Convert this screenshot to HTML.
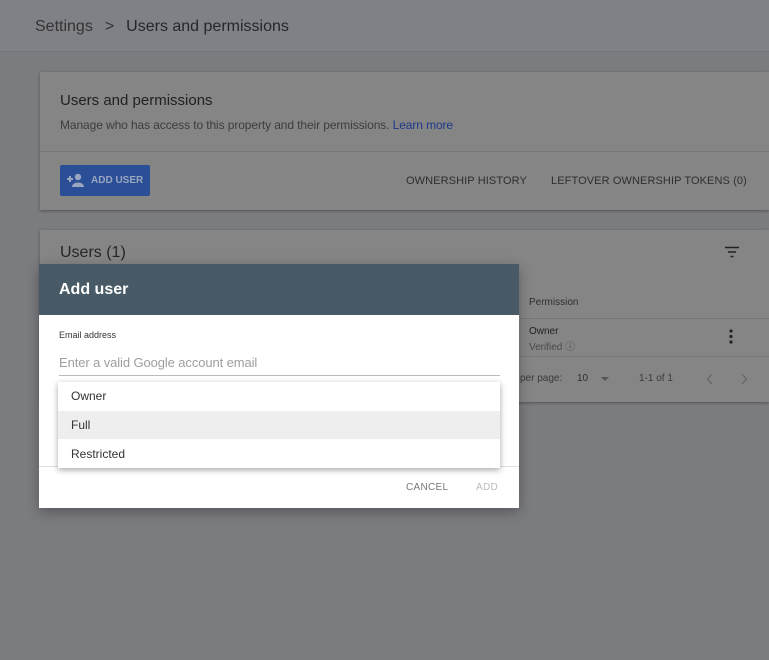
<!DOCTYPE html>
<html><head><meta charset="utf-8">
<style>
*{box-sizing:border-box;margin:0;padding:0}
html{background:#7b7c80}
body{width:769px;height:660px;overflow:hidden;background:#7b7c80;font-family:"Liberation Sans",Arial,sans-serif;position:relative}
.abs{position:absolute}
.hdr{left:0;top:0;width:769px;height:52px;background:#808186;border-bottom:1px solid #75767a}
.crumb{left:35px;top:18px;font-size:16px;color:#26272a}
.card{background:#858585;box-shadow:0 1px 3px rgba(0,0,0,.35)}
.t{color:#202124}
</style></head><body>
<div class="abs" style="left:0;top:0;width:769px;height:660px;background:#7b7c80"></div>
<div class="abs hdr"></div>
<div class="abs crumb"><span style="color:#333">Settings</span><span style="margin:0 12px 0 12px;color:#333">&gt;</span>Users and permissions</div>

<div class="abs card" style="left:40px;top:72px;width:729px;height:138px">
  <div class="abs t" style="left:20px;top:20px;font-size:15px">Users and permissions</div>
  <div class="abs" style="left:20px;top:46px;font-size:12px;color:#3d3d3d;letter-spacing:-.1px">Manage who has access to this property and their permissions. <span style="color:#1c3a8a">Learn more</span></div>
  <div class="abs" style="left:0;top:79px;width:729px;border-top:1px solid #777"></div>
  <div class="abs" style="left:20px;top:93px;width:90px;height:31px;background:#2a4f96;border-radius:2px;color:#9aa5bf;font-size:10px;font-weight:bold;line-height:31px;padding-left:31px;white-space:nowrap">ADD USER
    <svg class="abs" style="left:6px;top:8px" width="20" height="15" viewBox="0 0 20 15"><path d="M1 6h6M4 3v6" stroke="#9aa5bf" stroke-width="2"/><circle cx="12" cy="4" r="3.2" fill="#9aa5bf"/><path d="M6 14c0-3 3-4.5 6-4.5s6 1.5 6 4.5z" fill="#9aa5bf"/></svg>
  </div>
  <div class="abs" style="left:366px;top:103px;font-size:11px;color:#2f2f2f;letter-spacing:.1px">OWNERSHIP HISTORY</div>
  <div class="abs" style="left:511px;top:103px;font-size:11px;color:#2f2f2f;letter-spacing:.1px">LEFTOVER OWNERSHIP TOKENS (0)</div>
</div>

<div class="abs card" style="left:40px;top:230px;width:729px;height:172px">
  <div class="abs t" style="left:20px;top:14px;font-size:16px;color:#262626">Users (1)</div>
  <svg class="abs" style="left:684px;top:16px" width="16" height="12"><path d="M1 1.5h14M4 6h8M6.5 10.5h3" stroke="#222" stroke-width="1.5"/></svg>
  <div class="abs" style="left:489px;top:67px;font-size:10px;color:#2e2e2e">Permission</div>
  <div class="abs" style="left:480px;top:88px;width:249px;border-top:1px solid #777"></div>
  <div class="abs" style="left:489px;top:96px;font-size:10px;color:#222">Owner</div>
  <div class="abs" style="left:489px;top:108px;font-size:10px;color:#4a4a4a">Verified &#9432;</div>
  <svg class="abs" style="left:688px;top:99px" width="6" height="16"><circle cx="3" cy="2" r="1.6" fill="#222"/><circle cx="3" cy="7.5" r="1.6" fill="#222"/><circle cx="3" cy="13" r="1.6" fill="#222"/></svg>
  <div class="abs" style="left:480px;top:126px;width:249px;border-top:1px solid #777"></div>
  <div class="abs" style="left:480px;top:143px;font-size:10px;color:#3a3a3a">per page:</div>
  <div class="abs" style="left:537px;top:143px;font-size:10px;color:#2e2e2e">10</div>
  <svg class="abs" style="left:561px;top:147px" width="8" height="5"><path d="M0 0h8L4 4z" fill="#555"/></svg>
  <div class="abs" style="left:599px;top:143px;font-size:10px;color:#3a3a3a">1-1 of 1</div>
  <svg class="abs" style="left:666px;top:143px" width="8" height="12"><path d="M6 1L1.5 6 6 11" stroke="#666" fill="none" stroke-width="1.3"/></svg>
  <svg class="abs" style="left:700px;top:143px" width="8" height="12"><path d="M2 1l4.5 5L2 11" stroke="#666" fill="none" stroke-width="1.3"/></svg>
</div>

<div class="abs" style="left:39px;top:264px;width:480px;height:244px;background:#fff;box-shadow:0 4px 12px rgba(0,0,0,.3)">
  <div class="abs" style="left:0;top:0;width:480px;height:51px;background:#475a66"></div>
  <div class="abs" style="left:20px;top:17px;font-size:16px;font-weight:bold;color:#fff">Add user</div>
  <div class="abs" style="left:20px;top:66px;font-size:9px;color:#333">Email address</div>
  <div class="abs" style="left:20px;top:91px;font-size:13px;color:#9e9e9e;letter-spacing:-.1px">Enter a valid Google account email</div>
  <div class="abs" style="left:20px;top:111px;width:441px;border-top:1px solid #bbb"></div>
  <div class="abs" style="left:0;top:202px;width:480px;border-top:1px solid #e0e0e0"></div>
  <div class="abs" style="left:367px;top:218px;font-size:10px;color:#777;letter-spacing:.3px">CANCEL</div>
  <div class="abs" style="left:437px;top:218px;font-size:10px;color:#bbb;letter-spacing:.3px">ADD</div>
</div>

<div class="abs" style="left:58px;top:382px;width:442px;height:86px;background:#fff;box-shadow:0 2px 6px rgba(0,0,0,.35)">
  <div class="abs" style="left:13px;top:7px;font-size:12px;color:#333">Owner</div>
  <div class="abs" style="left:0;top:29px;width:442px;height:28px;background:#eeeeee"></div>
  <div class="abs" style="left:13px;top:36px;font-size:12px;color:#333">Full</div>
  <div class="abs" style="left:13px;top:65px;font-size:12px;color:#333">Restricted</div>
</div>
</body></html>
